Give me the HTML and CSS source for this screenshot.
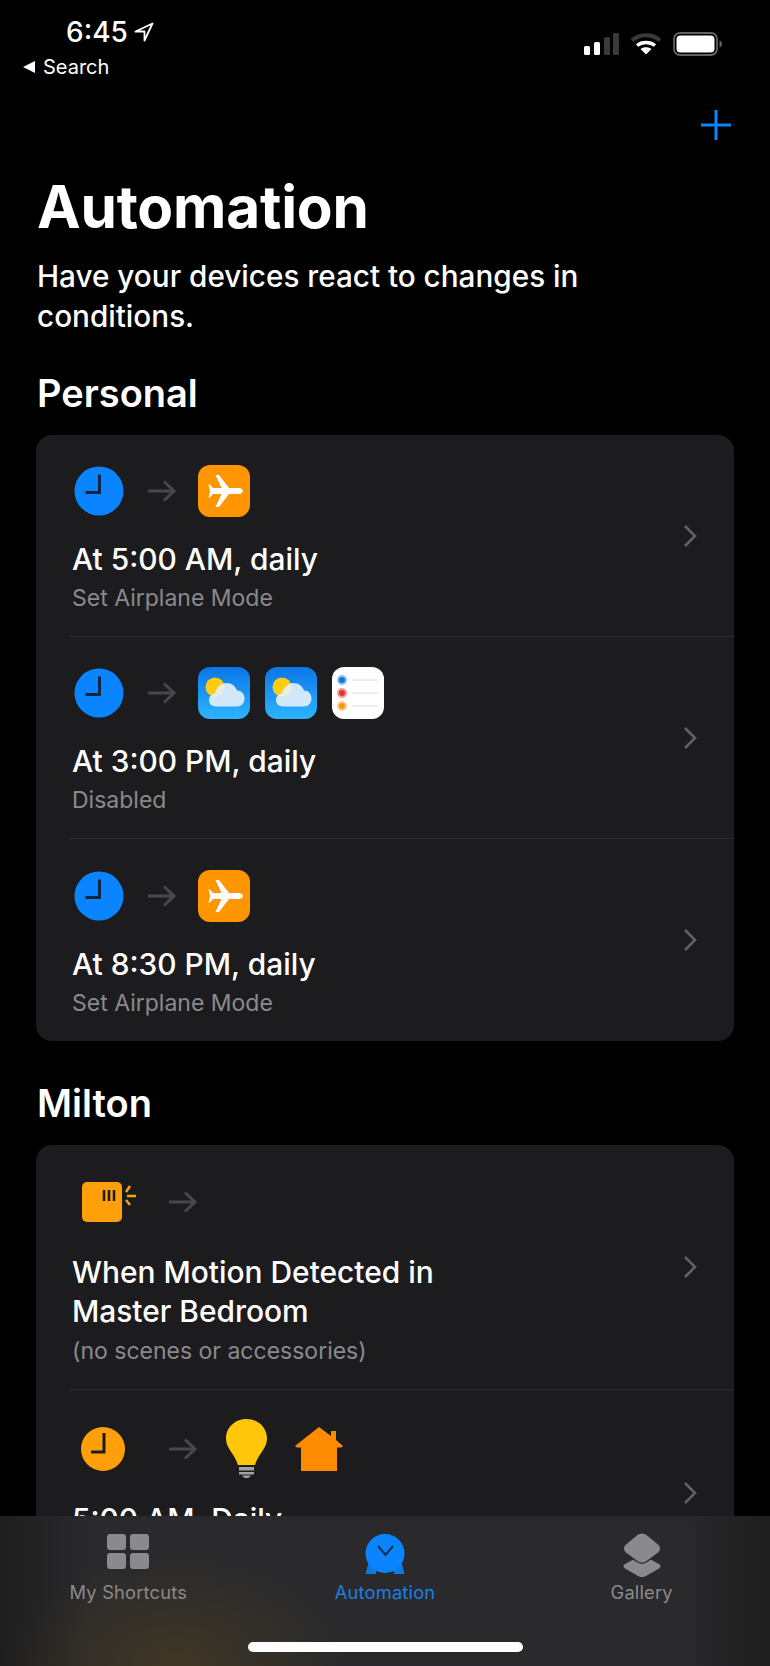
FILE: index.html
```html
<!DOCTYPE html>
<html lang="en">
<head>
<meta charset="utf-8">
<title>Automation</title>
<link rel="stylesheet" href="styles.css">
</head>
<body>
<svg class="defs" width="0" height="0" aria-hidden="true">
  <defs>
    <symbol id="arrow" viewBox="0 0 29 24"><path d="M1 12H27M17 2.500L27 12L17 21.500" fill="none" stroke="#48484a" stroke-width="3"/></symbol>
    <symbol id="clock" viewBox="0 0 50 50"><circle cx="25" cy="25" r="24.500" fill="#0a84ff"/><path d="M25.500 8.500V26.500H11.500" fill="none" stroke="#10253f" stroke-width="3"/></symbol>
    <symbol id="plane" viewBox="0 0 52 52"><rect width="52" height="52" rx="12" fill="#ff9500"/><path d="M45 26c0-1.500-2-3-4-3H31L21 10h-3.500L23.500 23H15l-3-3.500h-1.500L12 26l-1.500 6.500H12l3-3.500h8.500l-6 13H21l10-13h10c2 0 4-1.500 4-3z" fill="#fff"/></symbol>
    <linearGradient id="sky" x1="0" y1="0" x2="0" y2="1"><stop offset="0" stop-color="#0a76e6"/><stop offset="1" stop-color="#2fb4ff"/></linearGradient>
    <symbol id="weather" viewBox="0 0 52 52"><rect width="52" height="52" rx="12" fill="url(#sky)"/><circle cx="17" cy="20" r="9.500" fill="#ffcc12"/><path d="M18 39.500c-4 0-7-2.800-7-6.500 0-3.500 2.700-6.200 6-6.500C18.500 20.500 23 16 28.500 16c5 0 9 3 10.500 7.500 4.300 0 7.500 3.300 7.500 8s-3.200 8-7.500 8z" fill="#e4f2fb" fill-opacity=".9"/></symbol>
    <symbol id="reminders" viewBox="0 0 52 52"><rect width="52" height="52" rx="12" fill="#fff"/><circle cx="10" cy="13" r="5" fill="#8cc4f5"/><circle cx="10" cy="13" r="3" fill="#0a7ae0"/><circle cx="10" cy="26" r="5" fill="#f49a9a"/><circle cx="10" cy="26" r="3" fill="#e5373a"/><circle cx="10" cy="39" r="5" fill="#fbcf8f"/><circle cx="10" cy="39" r="3" fill="#f5970f"/><path d="M20 13H46M20 26H46M20 39H46" stroke="#dcdcdc"/></symbol>
  </defs>
</svg>

<div class="app">
  <header class="status">
    <div class="status-left">
      <div class="time-line">
        <span class="time">6:45</span>
        <svg class="loc" viewBox="0 0 20 20"><path d="M18.500 1.500L1.500 9.500H10.500V18.500Z" fill="none" stroke="#fff" stroke-width="1.800" stroke-linejoin="round"/></svg>
      </div>
      <div class="back-line"><span class="back-tri"></span><span class="back-text">Search</span></div>
    </div>
    <div class="status-right">
      <svg class="signal" viewBox="0 0 35 22"><rect y="13" width="6" height="9" rx="1.500" fill="#fff"/><rect x="10" y="9" width="6" height="13" rx="1.500" fill="#fff"/><rect x="20" y="4" width="6" height="18" rx="1.500" fill="#3a3a3c"/><rect x="29" width="6" height="22" rx="1.500" fill="#3a3a3c"/></svg>
      <svg class="wifi" viewBox="0 0 30 22"><path d="M1 7.500C9 .5 21 .5 29 7.500" fill="none" stroke="#3a3a3c" stroke-width="4"/><path d="M6 12.500C11 8.500 19 8.500 24 12.500" fill="none" stroke="#fff" stroke-width="3.500"/><path d="M15 21.500L9.500 16C12.500 13.500 17.500 13.500 20.500 16Z" fill="#fff"/></svg>
      <svg class="battery" viewBox="0 0 50 24"><rect x="1" y="1" width="43" height="22" rx="6" fill="none" stroke="#636366" stroke-width="1.800"/><rect x="3.500" y="3.500" width="38" height="17" rx="4" fill="#fff"/><path d="M46.500 8.500c1.700.5 2.500 2 2.500 3.500s-.8 3-2.500 3.500z" fill="#636366"/></svg>
    </div>
  </header>

  <div class="nav">
    <svg class="plus" viewBox="0 0 32 32"><path d="M16 1V31M1 16H31" stroke="#0a84ff" stroke-width="3"/></svg>
  </div>

  <main class="content">
    <h1 class="title">Automation</h1>
    <p class="lede">Have your devices react to changes in conditions.</p>

    <h2 class="section section-personal">Personal</h2>
    <section class="card">
      <article class="row">
        <div class="row-main">
          <div class="icons">
            <svg class="clock"><use href="#clock"/></svg>
            <svg class="arrow"><use href="#arrow"/></svg>
            <svg class="app-icon"><use href="#plane"/></svg>
          </div>
          <div class="row-title">At 5:00 AM, daily</div>
          <div class="row-sub">Set Airplane Mode</div>
        </div>
        <svg class="chev" viewBox="0 0 14 24"><path d="M2 2L12 12L2 22" fill="none" stroke="#636366" stroke-width="2.500"/></svg>
      </article>
      <article class="row">
        <div class="row-main">
          <div class="icons">
            <svg class="clock"><use href="#clock"/></svg>
            <svg class="arrow"><use href="#arrow"/></svg>
            <svg class="app-icon"><use href="#weather"/></svg>
            <svg class="app-icon"><use href="#weather"/></svg>
            <svg class="app-icon"><use href="#reminders"/></svg>
          </div>
          <div class="row-title">At 3:00 PM, daily</div>
          <div class="row-sub">Disabled</div>
        </div>
        <svg class="chev" viewBox="0 0 14 24"><path d="M2 2L12 12L2 22" fill="none" stroke="#636366" stroke-width="2.500"/></svg>
      </article>
      <article class="row row-last">
        <div class="row-main">
          <div class="icons">
            <svg class="clock"><use href="#clock"/></svg>
            <svg class="arrow"><use href="#arrow"/></svg>
            <svg class="app-icon"><use href="#plane"/></svg>
          </div>
          <div class="row-title">At 8:30 PM, daily</div>
          <div class="row-sub">Set Airplane Mode</div>
        </div>
        <svg class="chev" viewBox="0 0 14 24"><path d="M2 2L12 12L2 22" fill="none" stroke="#636366" stroke-width="2.500"/></svg>
      </article>
    </section>

    <h2 class="section section-milton">Milton</h2>
    <section class="card">
      <article class="row row-motion">
        <div class="row-main">
          <div class="icons icons-home">
            <svg class="lead" viewBox="0 0 56 40"><rect x="1" width="40" height="40" rx="5" fill="#ff9f0a"/><path d="M23 8V19M28 8V19M33 8V19" stroke="#1c1c1e" stroke-width="2.500"/><path d="M45 10L49 4M46 14H55M45 18L49 23" stroke="#ff9f0a" stroke-width="2.500"/></svg>
            <svg class="arrow"><use href="#arrow"/></svg>
          </div>
          <div class="row-title row-title-wrap">When Motion Detected in Master Bedroom</div>
          <div class="row-sub">(no scenes or accessories)</div>
        </div>
        <svg class="chev" viewBox="0 0 14 24"><path d="M2 2L12 12L2 22" fill="none" stroke="#636366" stroke-width="2.500"/></svg>
      </article>
      <article class="row row-morning">
        <div class="row-main">
          <div class="icons icons-home icons-tall">
            <svg class="lead" viewBox="0 0 56 44"><circle cx="22" cy="22" r="22" fill="#ff9f0a"/><path d="M23 6V25H10" fill="none" stroke="#1c1c1e" stroke-width="3"/></svg>
            <svg class="arrow"><use href="#arrow"/></svg>
            <svg class="bulb" viewBox="0 0 41 59"><path d="M20.500 0C9 0 0 8.500 0 19.500C0 30 9 35 12 46H29C32 35 41 30 41 19.500C41 8.500 32 0 20.500 0Z" fill="#ffc60a"/><path d="M13 48H28V51.500H13ZM13 53H28V55.500H13Z" fill="#a1a1a6"/><path d="M16 56.500H25L22.500 59H18.500Z" fill="#a1a1a6"/></svg>
            <svg class="home" viewBox="0 0 48 44"><path d="M24 0L36 9V4H41V13L48 19L46 20.500H42V44H6V20.500H2L0 19Z" fill="#ff8c00"/></svg>
          </div>
          <div class="row-title">5:00 AM, Daily</div>
          <div class="row-sub">&nbsp;</div>
        </div>
        <svg class="chev" viewBox="0 0 14 24"><path d="M2 2L12 12L2 22" fill="none" stroke="#636366" stroke-width="2.500"/></svg>
      </article>
    </section>
  </main>

  <nav class="tabbar">
    <div class="tab">
      <svg class="tab-icon" viewBox="0 0 44 44"><g fill="#8a8a8e"><rect x="1" y="1" width="19" height="16" rx="3"/><rect x="24" y="1" width="19" height="16" rx="3"/><rect x="1" y="20" width="19" height="16" rx="3"/><rect x="24" y="20" width="19" height="16" rx="3"/></g></svg>
      <span class="tab-label">My Shortcuts</span>
    </div>
    <div class="tab tab-active">
      <svg class="tab-icon" viewBox="0 0 44 44"><path d="M2.500 41L5 31H13V41ZM41.500 41L39 31H31V41Z" fill="#0a7ae0"/><circle cx="22" cy="20.500" r="19.500" fill="#0a84ff"/><path d="M15 13L22.500 22L30 13" fill="none" stroke="#12304f" stroke-width="2"/></svg>
      <span class="tab-label">Automation</span>
    </div>
    <div class="tab">
      <svg class="tab-icon" viewBox="0 0 44 44"><path d="M22 22L39 31C41 32 41 34 39 35.500L26 43C23.500 44.500 20.500 44.500 18 43L5 35.500C3 34 3 32 5 31Z" fill="#8a8a8e"/><path d="M17 1.500C20 -.5 24 -.5 27 1.500L38.500 11C41.500 13.500 41.500 17.500 38.500 20L27 28.500C24 30.500 20 30.500 17 28.500L5.500 20C2.500 17.500 2.500 13.500 5.500 11Z" fill="#8a8a8e" stroke="#2a2a2c" stroke-width="1.500"/></svg>
      <span class="tab-label">Gallery</span>
    </div>
    <div class="home-indicator"></div>
  </nav>
</div>
</body>
</html>
```

FILE: styles.css
```css
* { box-sizing: border-box; }
html, body { margin: 0; padding: 0; background: #000; }
body { font-family: Inter, "Liberation Sans", sans-serif; color: #fff; }
.defs { position: absolute; }
.app { position: relative; width: 770px; height: 1666px; overflow: hidden; background: #000; }

.status { display: flex; justify-content: space-between; height: 82px; padding: 16px 47px 0 23px; }
.time-line { display: flex; align-items: center; gap: 6px; padding-left: 43px; height: 32px; }
.time { font-size: 28px; font-weight: 500; line-height: 32px; }
.loc { width: 20px; height: 20px; }
.back-line { display: flex; align-items: center; gap: 8px; margin-top: 7px; height: 24px; }
.back-tri { width: 0; height: 0; border-style: solid; border-width: 6.500px 12px 6.500px 0; border-color: transparent #fff transparent transparent; }
.back-text { font-size: 20px; font-weight: 400; line-height: 24px; }
.status-right { display: flex; align-items: flex-start; gap: 12px; padding-top: 16px; }
.signal { width: 35px; height: 22px; margin-top: 1px; }
.wifi { width: 30px; height: 22px; margin-top: 1px; }
.battery { width: 50px; height: 24px; }

.nav { display: flex; justify-content: flex-end; height: 58px; padding: 27px 38px 0 0; }
.plus { width: 32px; height: 32px; }

.content { padding: 0 36px; }
.title { margin: 37px 0 0 1px; font-size: 58.5px; font-weight: 700; line-height: 60px; letter-spacing: -0.2px; }
.lede { margin: 19px 0 0 1px; max-width: 570px; font-size: 29.700px; font-weight: 500; line-height: 40px; }
.section { margin: 0 0 0 1px; font-size: 38px; font-weight: 600; line-height: 44px; }
.section-personal { margin-top: 35px; }
.section-milton { margin-top: 40px; }
.card { margin-top: 20px; border-radius: 16px; background: #1c1c1f; padding-left: 33px; }

.row { display: flex; align-items: center; justify-content: space-between; padding: 0 37px 0 3px; height: 202px; border-bottom: 1px solid #2c2c2e; }
.row-last { border-bottom: 0; }
.row-main { flex: 1; min-width: 0; padding: 29px 0 18px; }
.icons { display: flex; align-items: center; height: 52px; padding-left: 2px; }
.clock { width: 50px; height: 50px; }
.arrow { width: 29px; height: 24px; margin: 0 22px 0 23px; }
.app-icon { width: 52px; height: 52px; margin-right: 15px; }
.row-title { margin-top: 22px; font-size: 29.900px; font-weight: 500; line-height: 40px; }
.row-sub { font-size: 23px; font-weight: 400; line-height: 38px; color: #8a8a8e; }
.chev { flex: none; width: 14px; height: 24px; }

.row-motion { height: 245px; }
.row-motion .row-sub { margin-top: 1px; }
.row-morning { height: 205px; border-bottom: 0; }
.lead { width: 56px; height: 40px; margin-left: 7px; }
.icons-tall .lead { height: 44px; }
.icons-home .arrow { margin: 0 29px 0 31px; }
.icons-tall { height: 59px; }
.bulb { width: 41px; height: 59px; margin-right: 28px; }
.home { width: 48px; height: 44px; }
.row-title-wrap { margin-top: 25px; max-width: 400px; line-height: 39px; }
.icons-tall + .row-title { margin-top: 21px; }

.tabbar {
  position: absolute; left: 0; right: 0; bottom: 0; height: 150px;
  display: flex; padding-top: 13px;
  background:
    radial-gradient(ellipse 170px 110px at 175px 150px, rgba(120, 90, 20, 0.28), rgba(120, 90, 20, 0) 100%),
    linear-gradient(90deg, #1e1e1f 0, #2a2a2c 12%, #2a2a2c 88%, #1e1e1f 100%);
}
.tab { flex: 1; display: flex; flex-direction: column; align-items: center; }
.tab-icon { width: 44px; height: 44px; margin-top: 4px; }
.tab-label { margin-top: 4px; font-size: 18.300px; font-weight: 400; line-height: 22px; color: #8a8a8e; letter-spacing: 0.2px; }
.tab-active .tab-label { color: #1a80e5; }
.home-indicator { position: absolute; left: 248px; bottom: 14px; width: 275px; height: 10px; border-radius: 5px; background: #fff; }
```
